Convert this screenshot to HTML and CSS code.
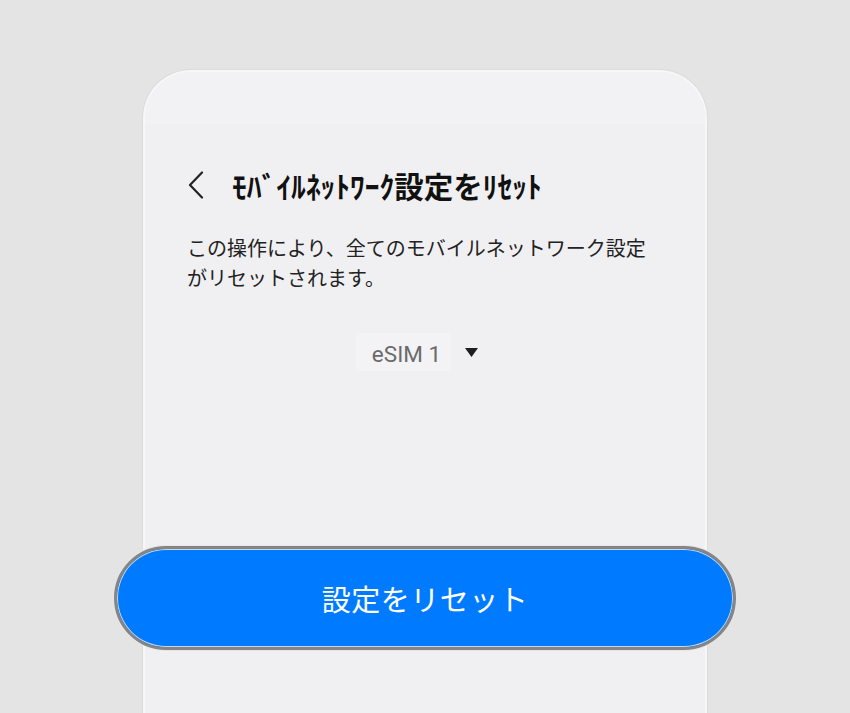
FILE: index.html
```html
<!DOCTYPE html>
<html lang="ja">
<head>
<meta charset="utf-8">
<link rel="stylesheet" href="styles.css">
</head>
<body>
<div class="stage">
  <div class="phone">
    <div class="statusband"></div>
    <div class="titlerow">
      <svg class="back" width="16" height="28" viewBox="0 0 16 28"><polyline points="14,1.5 2,14 14,26.5" fill="none" stroke="#222" stroke-width="2.2" stroke-linejoin="round" stroke-linecap="round"/></svg>
      <h1 class="title">ﾓﾊﾞｲﾙﾈｯﾄﾜｰｸ設定をﾘｾｯﾄ</h1>
    </div>
    <p class="desc">この操作により、全てのモバイルネットワーク設定<br>がリセットされます。</p>
    <div class="dropwrap">
      <div class="drop"><span class="droplabel">eSIM 1</span><svg class="caret" width="13" height="9" viewBox="0 0 13 9"><polygon points="0,0 13,0 6.5,9" fill="#1e1e1e"/></svg></div>
    </div>
    <div class="btnwrap"><div class="btn">設定をリセット</div></div>
  </div>
</div>
</body>
</html>
```
FILE: styles.css
```css
html, body {
  margin: 0;
  padding: 0;
  background: #e4e4e4;
  overflow: hidden;
  height: 713px;
}
.stage {
  padding-top: 70px;
  display: flex;
  justify-content: center;
}
.phone {
  width: 560px;
  height: 641px;
  background: #f0f0f2;
  border: 2px solid #f7f7f8;
  border-bottom: none;
  border-radius: 48px 48px 0 0;
  box-shadow: 0 0 0 1px #dcdcdc;
  font-family: "Noto Sans CJK JP", "Noto Sans", sans-serif;
  display: flex;
  flex-direction: column;
}
.statusband {
  height: 52px;
  background: #f2f2f4;
  border-radius: 46px 46px 0 0;
}
.titlerow {
  margin-top: 41px;
  height: 40px;
  display: flex;
  align-items: center;
  padding-left: 43px;
}
.back {
  display: block;
  margin-right: 28px;
}
.title {
  margin: 0;
  font-size: 29.5px;
  line-height: 40px;
  font-weight: 700;
  color: #111;
  white-space: nowrap;
}
.desc {
  margin: 28px 0 0 0;
  padding-left: 42px;
  font-size: 20px;
  line-height: 30px;
  letter-spacing: 0;
  color: #222;
}
.dropwrap {
  margin-top: 40px;
  display: flex;
  justify-content: center;
  padding-right: 16px;
}
.drop {
  display: flex;
  align-items: center;
  height: 38px;
}
.droplabel {
  font-family: Roboto, "Noto Sans", sans-serif;
  font-size: 22.5px;
  color: #6a6a6a;
  background: #f3f3f5;
  height: 38px;
  line-height: 38px;
  padding: 2px 10px 0 16px;
  box-sizing: border-box;
}
.caret {
  display: block;
  margin-left: 14px;
  margin-top: 0;
}
.btnwrap {
  margin: 175px -31px 0 -31px;
}
.btn {
  height: 98px;
  border-radius: 52px;
  background: #007bff;
  border: 3px solid #858585;
  box-shadow: inset 0 0 0 1px #c9d6e4, 0 0 0 1px #e6e6e6;
  color: #fff;
  font-size: 29px;
  font-weight: 400;
  display: flex;
  align-items: center;
  justify-content: center;
  letter-spacing: 0.5px;
}
```
